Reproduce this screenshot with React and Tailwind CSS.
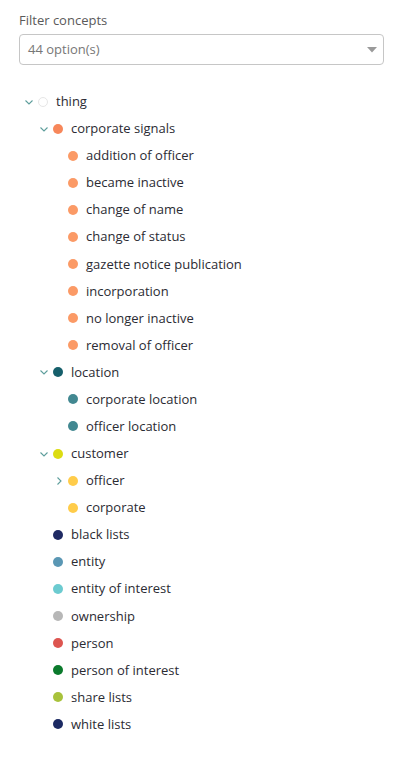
import React from 'react';

const tree = [
  {
    label: 'thing',
    hollow: true,
    open: true,
    children: [
      {
        label: 'corporate signals',
        color: '#f7875a',
        open: true,
        children: [
          'addition of officer',
          'became inactive',
          'change of name',
          'change of status',
          'gazette notice publication',
          'incorporation',
          'no longer inactive',
          'removal of officer',
        ].map((label) => ({ label, color: '#fb9a66' })),
      },
      {
        label: 'location',
        color: '#165f6b',
        open: true,
        children: [
          { label: 'corporate location', color: '#428891' },
          { label: 'officer location', color: '#428891' },
        ],
      },
      {
        label: 'customer',
        color: '#dcdc12',
        open: true,
        children: [
          { label: 'officer', color: '#ffcc4a', closed: true },
          { label: 'corporate', color: '#ffcc4a' },
        ],
      },
      { label: 'black lists', color: '#1f2a63' },
      { label: 'entity', color: '#5a97b4' },
      { label: 'entity of interest', color: '#6ccbd0' },
      { label: 'ownership', color: '#b7b7b7' },
      { label: 'person', color: '#dd5550' },
      { label: 'person of interest', color: '#0b7a2c' },
      { label: 'share lists', color: '#a8c23c' },
      { label: 'white lists', color: '#1c2a63' },
    ],
  },
];

const padByLevel = ['pl-[5px]', 'pl-[20px]', 'pl-[35px]'];

function Chevron({ open }) {
  return (
    <svg width="10" height="10" viewBox="0 0 10 10" className="shrink-0">
      {open ? (
        <polyline points="1.5,3.5 5,7 8.5,3.5" fill="none" stroke="#5e9e9c" strokeWidth="1.1" />
      ) : (
        <polyline points="3.5,1.5 7,5 3.5,8.5" fill="none" stroke="#5e9e9c" strokeWidth="1.1" />
      )}
    </svg>
  );
}

function Node({ node, level }) {
  const hasToggle = node.open || node.closed;
  return (
    <>
      <div className={`flex items-center h-[27.09px] ${padByLevel[level]}`}>
        {hasToggle ? <Chevron open={node.open} /> : <span className="w-[10px] shrink-0" />}
        {node.hollow ? (
          <span className="ml-[4px] w-[10px] h-[10px] rounded-full border border-[#e6e6e6] shrink-0" />
        ) : (
          <span
            className="ml-[4px] w-[10px] h-[10px] rounded-full shrink-0"
            style={{ backgroundColor: node.color }}
          />
        )}
        <span className="ml-[8px] text-[13px] text-[#2b2b33] leading-none whitespace-nowrap">{node.label}</span>
      </div>
      {node.open && node.children?.map((c) => <Node key={c.label} node={c} level={level + 1} />)}
    </>
  );
}

export default function App() {
  return (
    <div className="w-[408px] min-h-[777px] bg-white pl-[19px] pt-[12px]" style={{ fontFamily: '"Open Sans", sans-serif' }}>
      <div className="text-[13px] text-[#5a5a5a] leading-[16px]">Filter concepts</div>
      <div className="mt-[6px] w-[365px] h-[31px] border border-[#c6c6c6] rounded-[4px] flex items-center justify-between pl-[8px] pr-[6px]">
        <span className="text-[13px] text-[#777]">44 option(s)</span>
        <svg width="10" height="6" viewBox="0 0 10 6">
          <polygon points="0,0 10,0 5,5.5" fill="#9a9a9a" />
        </svg>
      </div>
      <div className="mt-[23px]">
        {tree.map((n) => (
          <Node key={n.label} node={n} level={0} />
        ))}
      </div>
    </div>
  );
}
